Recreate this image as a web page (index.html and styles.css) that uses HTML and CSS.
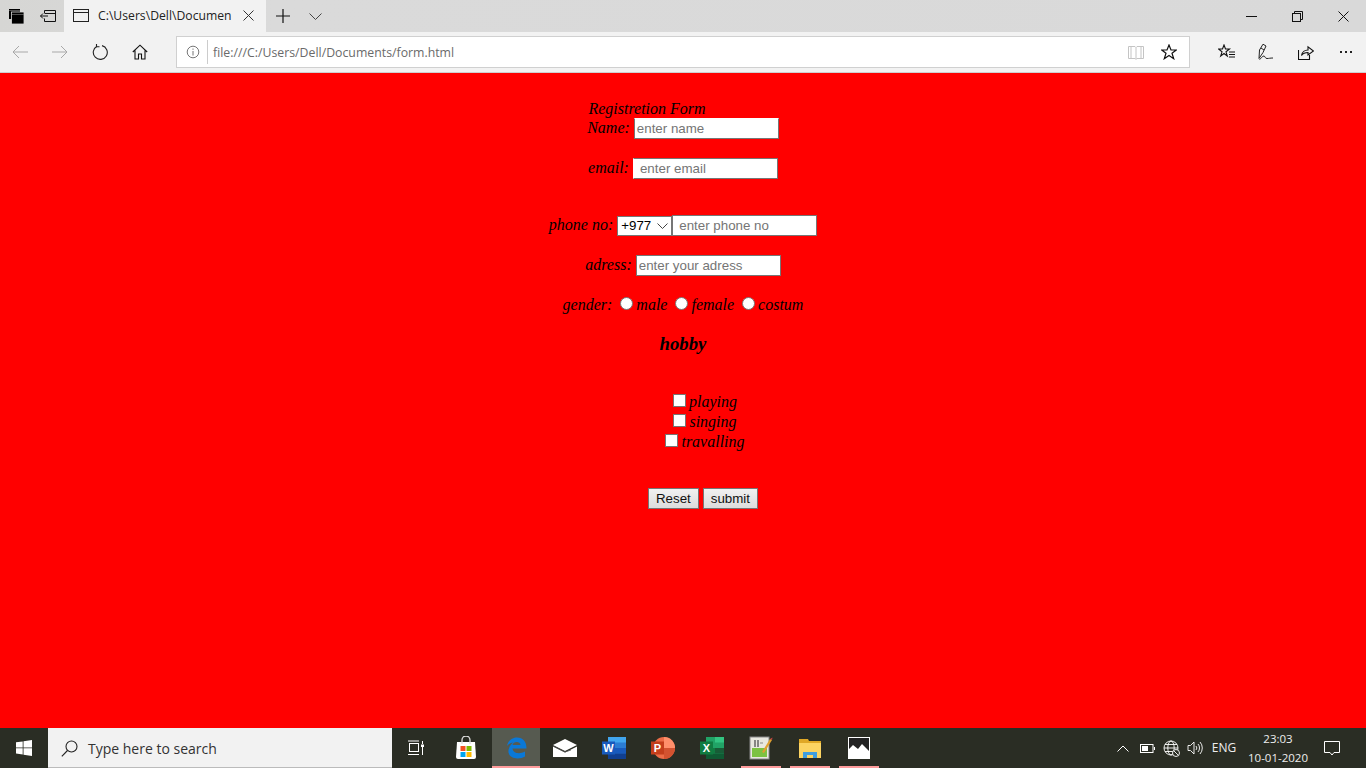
FILE: index.html
```html
<!DOCTYPE html>
<html lang="en">
<head>
<meta charset="utf-8">
<title>form.html</title>
<link rel="stylesheet" href="styles.css">
</head>
<body>
<div class="browser">
  <div class="tabstrip">
    <div class="slot-strip">
      <svg width="15" height="15" viewBox="0 0 15 15"><rect x="0" y="0" width="11" height="10" fill="#000"/><rect x="2.500" y="3" width="12.500" height="12" fill="#000" stroke="#d9d9d9" stroke-width=".8"/><path d="M3 5.500h12" stroke="#888" stroke-width=".6"/><path d="M0 1.500h11" stroke="#888" stroke-width=".6"/></svg>
    </div>
    <div class="slot-strip">
      <svg width="18" height="16" viewBox="0 0 18 16" fill="none" stroke="#111"><path d="M5.500 2.500h11v11h-11v-3M5.500 5.500v-3M6 5.500h10.500"/><path d="M9 8H1.500M4 5.500L1.500 8 4 10.500"/></svg>
    </div>
    <div class="tab">
      <svg width="16" height="13" viewBox="0 0 16 13" fill="none" stroke="#222"><rect x=".5" y=".5" width="15" height="12"/><path d="M.5 3.500h15"/></svg>
      <span class="tab-title">C:\Users\Dell\Documen</span>
      <svg class="tab-close" width="11" height="11" viewBox="0 0 11 11" fill="none" stroke="#333"><path d="M.5.500l10 10M10.500.500l-10 10"/></svg>
    </div>
    <div class="slot-plus">
      <svg width="14" height="14" viewBox="0 0 14 14" fill="none" stroke="#111" stroke-width="1.200"><path d="M7 0v14M0 7h14"/></svg>
    </div>
    <div class="slot-chev">
      <svg width="13" height="7" viewBox="0 0 13 7" fill="none" stroke="#444"><path d="M.5.500l6 6 6-6"/></svg>
    </div>
    <div class="strip-fill"></div>
    <div class="win-btn"><svg width="11" height="11" viewBox="0 0 11 11" fill="none" stroke="#111"><path d="M0 5.500h11"/></svg></div>
    <div class="win-btn"><svg width="11" height="11" viewBox="0 0 11 11" fill="none" stroke="#111"><rect x=".5" y="2.500" width="8" height="8"/><path d="M2.500 2.500v-2h8v8h-2"/></svg></div>
    <div class="win-btn"><svg width="11" height="11" viewBox="0 0 11 11" fill="none" stroke="#111"><path d="M.5.500l10 10M10.500.500l-10 10"/></svg></div>
  </div>
  <div class="toolbar">
    <div class="slot-tool"><svg width="16" height="14" viewBox="0 0 16 14" fill="none" stroke="#a8a8a8"><path d="M16 7H1M7 1L1 7l6 6"/></svg></div>
    <div class="slot-tool"><svg width="16" height="14" viewBox="0 0 16 14" fill="none" stroke="#a8a8a8"><path d="M0 7h15M9 1l6 6-6 6"/></svg></div>
    <div class="slot-tool"><svg width="16" height="16" viewBox="0 0 16 16" fill="none" stroke="#222" stroke-width="1.100"><path d="M5 2.200A7 7 0 1 0 10 1.600"/><path d="M4.500 0v3h3" transform="translate(0 -.2)"/></svg></div>
    <div class="slot-tool"><svg width="16" height="16" viewBox="0 0 16 16" fill="none" stroke="#111" stroke-width="1.100"><path d="M.8 8L8 1.200 15.200 8M3 6.500v8.500h3.500v-5h3v5H13V6.500"/></svg></div>
    <div class="addr">
      <svg width="14" height="14" viewBox="0 0 14 14" fill="none" stroke="#777"><circle cx="7" cy="7" r="5.800"/><path d="M7 6v4.500M7 3.500v1.300"/></svg>
      <span class="addr-sep"></span>
      <span class="addr-url">file:///C:/Users/Dell/Documents/form.html</span>
      <svg class="addr-book" width="16" height="15" viewBox="0 0 16 15" fill="none" stroke="#c4c4c4"><path d="M.5 1.500h6.500l1 1 1-1h6.500v12H9l-1 .8-1-.8H.5zM8 2.500v11M3 1.500v12M13 1.500v12"/></svg>
      <svg class="addr-star" width="16" height="16" viewBox="0 0 16 16" fill="none" stroke="#111" stroke-width="1.200"><path d="M8 1l2 5h5.300l-4.300 3.300 1.700 5.400L8 11.500l-4.700 3.200L5 9.300.7 6H6z"/></svg>
    </div>
    <div class="tools-right">
      <div class="slot-tool"><svg width="17" height="16" viewBox="0 0 17 16" fill="none" stroke="#111" stroke-width="1.100"><path d="M6 1l1.500 4h4L8 7.800l1.300 4.200L6 9.500 2.700 12 4 7.800.5 5h4z"/><path d="M11 8h6M11 10.500h6M11 13h6"/></svg></div>
      <div class="slot-tool"><svg width="16" height="18" viewBox="0 0 16 18" fill="none" stroke="#222"><path d="M1 15.500L1.500 7 5 1.200 8 3 5 9.500zM3 5l3 2"/><path d="M1.500 16.500c2-1 3-4 4.500-3.500s1 2.500 3 2.500 3-.5 6-.5"/></svg></div>
      <div class="slot-tool"><svg width="16" height="15" viewBox="0 0 16 15" fill="none" stroke="#111" stroke-width="1.100"><path d="M.5 5v9.500h11V10"/><path d="M3.500 10.500C4 7 7 5 10 5V1.800L15.500 6 10 10V7.500c-2.500 0-5 .8-6.500 3z"/></svg></div>
      <div class="slot-tool more"><span class="dot"></span><span class="dot"></span><span class="dot"></span></div>
    </div>
  </div>
  <main class="page">
    <form class="form">
      <div class="row row-title"><i>Registretion Form</i></div>
      <div class="row"><i>Name:</i> <input class="field field-name" type="text" placeholder="enter name"></div>
      <div class="row gap-m"><i>email:</i> <input class="field field-mail" type="text" placeholder="enter email"></div>
      <div class="row gap-l"><i>phone no:</i> <select class="code"><option>+977</option></select><input class="field field-wide" type="text" placeholder="enter phone no"></div>
      <div class="row gap-m"><i>adress:</i> <input class="field" type="text" placeholder="enter your adress"></div>
      <div class="row gap-m"><i>gender:</i> <input class="radio" type="radio" name="g"><i>male</i> <input class="radio" type="radio" name="g"><i>female</i> <input class="radio" type="radio" name="g"><i>costum</i></div>
      <div class="row gap-s hobby"><i>hobby</i></div>
      <div class="row gap-xl row-shift"><input class="check" type="checkbox"><i>playing</i></div>
      <div class="row row-shift"><input class="check" type="checkbox"><i>singing</i></div>
      <div class="row row-shift"><input class="check" type="checkbox"><i>travalling</i></div>
      <div class="row gap-b row-shift-btn"><button class="btn" type="reset">Reset</button> <button class="btn" type="button">submit</button></div>
    </form>
  </main>
  <footer class="taskbar">
    <div class="start"><svg width="16" height="16" viewBox="0 0 16 16" fill="#fff"><path d="M0 2.300l6.700-.9v6.100H0zM7.500 1.300L16 0v7.500H7.500zM0 8.300h6.700v6.200L0 13.600zM7.500 8.300H16V16l-8.500-1.200z"/></svg></div>
    <div class="search">
      <svg width="17" height="17" viewBox="0 0 17 17" fill="none" stroke="#222" stroke-width="1.100"><circle cx="10.500" cy="6.500" r="5.500"/><path d="M6.500 10.500L.8 16.300"/></svg>
      <span class="search-text">Type here to search</span>
    </div>
    <div class="task task-view"><svg width="16" height="16" viewBox="0 0 16 16" fill="none" stroke="#fff"><rect x="1.500" y="3.500" width="9" height="8"/><path d="M0 1h11M0 14.500h11M14.500 1v3M14.500 7v8"/><rect x="13" y="4.500" width="3" height="2.500" fill="#fff" stroke="none"/></svg></div>
    <div class="task task-store"><svg width="24" height="24" viewBox="0 0 24 24"><path d="M3 6h18l1 15a2 2 0 0 1-2 2H4a2 2 0 0 1-2-2z" fill="#fff"/><path d="M8 8V4a4 4 0 0 1 8 0v4" fill="none" stroke="#ddd" stroke-width="1.300"/><rect x="6.500" y="10" width="5" height="5" fill="#f25022"/><rect x="12.500" y="10" width="5" height="5" fill="#7fba00"/><rect x="6.500" y="16" width="5" height="5" fill="#00a4ef"/><rect x="12.500" y="16" width="5" height="5" fill="#ffb900"/></svg></div>
    <div class="task task-active"><svg width="21" height="22" viewBox="0 0 21 22"><path d="M1 9C2 3 7 .5 11 .5c6 0 9.500 4 9.500 11H6.500c.5 5 7 6 12.500 3v5c-5 3-15 3-16.500-4C2 12 4 8 7 5.500 5 6 2.500 7 1 9zM6.500 8h8c0-4-7.500-4-8 0z" fill="#0a78d7"/></svg></div>
    <div class="task"><svg width="24" height="18" viewBox="0 0 24 18"><path d="M0 6L12 0l12 6-12 6z" fill="#fff"/><path d="M0 7.500V18h24V7.500L12 13.500z" fill="#fff"/><path d="M0 7l12 6 6-2" fill="none" stroke="#555" stroke-width=".8"/></svg></div>
    <div class="task"><svg width="24" height="22" viewBox="0 0 24 22"><rect x="6" y="0" width="18" height="22" fill="#2b7cd3"/><rect x="6" y="0" width="18" height="5.500" fill="#41a5ee"/><rect x="6" y="11" width="18" height="5.500" fill="#185abd"/><rect x="6" y="16.500" width="18" height="5.500" fill="#103f91"/><rect x="0" y="4.500" width="13" height="13" fill="#185abd"/><text class="app-letter" x="6.500" y="15" text-anchor="middle">W</text></svg></div>
    <div class="task"><svg width="24" height="22" viewBox="0 0 24 22"><circle cx="13" cy="11" r="11" fill="#ed6c47"/><path d="M13 0a11 11 0 0 1 11 11H13z" fill="#ff8f6b"/><path d="M13 11h11a11 11 0 0 1-11 11z" fill="#d35230"/><rect x="0" y="4.500" width="13" height="13" fill="#c43e1c"/><text class="app-letter" x="6.500" y="15" text-anchor="middle">P</text></svg></div>
    <div class="task"><svg width="24" height="22" viewBox="0 0 24 22"><rect x="6" y="0" width="18" height="22" fill="#21a366"/><rect x="15" y="0" width="9" height="5.500" fill="#33c481"/><rect x="6" y="11" width="9" height="5.500" fill="#107c41"/><rect x="15" y="11" width="9" height="5.500" fill="#185c37"/><rect x="6" y="16.500" width="18" height="5.500" fill="#0f5a33"/><rect x="0" y="4.500" width="13" height="13" fill="#107c41"/><text class="app-letter" x="6.500" y="15" text-anchor="middle">X</text></svg></div>
    <div class="task task-open"><svg width="24" height="24" viewBox="0 0 24 24"><rect x="1" y="1" width="19" height="22" fill="#e8e8e0" stroke="#888"/><rect x="3" y="12" width="15" height="9" fill="#7cc242"/><path d="M6 4v7M9 4v7" stroke="#666" stroke-width="1.500"/><path d="M11 7h3" stroke="#888"/><path d="M13 16L21 3l2 1-8 13z" fill="#e0a030"/><path d="M21 3l2 1 .5-2.500z" fill="#c44"/></svg></div>
    <div class="task task-open"><svg width="22" height="20" viewBox="0 0 22 20"><path d="M0 1h9l1 2h12v17H0z" fill="#e0a826"/><rect x="0" y="5" width="22" height="15" fill="#fcd462"/><path d="M4 20v-6h14v6h-4v-3h-6v3z" fill="#3f9ee0"/></svg></div>
    <div class="task task-open"><svg width="22" height="22" viewBox="0 0 22 22"><rect x=".5" y=".5" width="21" height="21" fill="#222" stroke="#fff"/><path d="M0 22V13l5-5 5 4 4-5 8 8v7z" fill="#fff"/></svg></div>
    <div class="tray-fill"></div>
    <div class="tray"><svg width="12" height="7" viewBox="0 0 12 7" fill="none" stroke="#fff"><path d="M.5 6.500L6 1l5.500 5.500"/></svg></div>
    <div class="tray"><svg width="15" height="9" viewBox="0 0 15 9" fill="none" stroke="#fff"><rect x=".5" y=".5" width="12.500" height="8"/><rect x="2" y="2" width="6" height="5" fill="#fff" stroke="none"/><path d="M14.500 3v3"/></svg></div>
    <div class="tray"><svg width="17" height="17" viewBox="0 0 17 17" fill="none" stroke="#fff" stroke-width=".9"><circle cx="8" cy="8" r="7"/><ellipse cx="8" cy="8" rx="3.200" ry="7"/><path d="M1 8h14M2 4.500h12M2 11.500h12"/><circle cx="13" cy="13" r="3.500" fill="#2a2d24"/><path d="M10.800 10.800l4.400 4.400"/></svg></div>
    <div class="tray"><svg width="17" height="14" viewBox="0 0 17 14" fill="none" stroke="#fff" stroke-width=".9"><path d="M1 4.500v5h2.500L7 13V1L3.500 4.500z"/><path d="M9 5a3 3 0 0 1 0 4M11 3a6 6 0 0 1 0 8M13 1a9 9 0 0 1 0 12"/></svg></div>
    <div class="tray-lang">ENG</div>
    <div class="clock"><span>23:03</span><span>10-01-2020</span></div>
    <div class="notify"><svg width="16" height="15" viewBox="0 0 16 15" fill="none" stroke="#fff"><path d="M.5.500h15v11H10l-2 2.500-2-2.500H.5z"/></svg></div>
    <div class="edge-end"></div>
  </footer>
</div>
</body>
</html>
```
FILE: styles.css
```css
* { box-sizing: border-box; }
html, body { margin: 0; height: 100%; }
body { overflow: hidden; }
.browser { display: flex; flex-direction: column; height: 768px; width: 1366px; font-family: "Open Sans", "Liberation Sans", sans-serif; }

.tabstrip { display: flex; height: 32px; background: linear-gradient(90deg, #d6d6d4, #dadada 20%, #d9d9d9); flex: none; }
.slot-strip { width: 32px; display: flex; align-items: center; justify-content: center; }
.tab { width: 202px; background: #f2f2f2; display: flex; align-items: center; padding: 0 0 1px 9px; color: #222; }
.tab-title { font-size: 12.200px; margin-left: 9px; white-space: nowrap; width: 146px; overflow: hidden; line-height: 20px; }
.tab-close { margin-left: -1px; }
.slot-plus { width: 34px; display: flex; align-items: center; justify-content: center; }
.slot-chev { width: 30px; display: flex; align-items: center; justify-content: center; }
.strip-fill { flex: 1; }
.win-btn { width: 46px; display: flex; align-items: center; justify-content: center; }

.toolbar { display: flex; height: 41px; background: #f2f2f2; align-items: flex-start; border-bottom: 1px solid #cfcfcf; flex: none; }
.slot-tool { width: 40px; height: 40px; display: flex; align-items: center; justify-content: center; }
.addr { margin: 4px 0 0 16px; flex: 1; height: 32px; background: #fff; border: 1px solid #d0d0d0; display: flex; align-items: center; padding-left: 9px; }
.addr-sep { width: 1px; height: 24px; background: #ccc; margin: 0 5px 0 7px; }
.addr-url { font-size: 12.300px; color: #6a6a6a; white-space: nowrap; flex: 1; }
.addr-book { margin-right: 17px; }
.addr-star { margin-right: 12px; }
.tools-right { display: flex; padding-left: 16px; }
.more { gap: 3px; }
.dot { width: 2px; height: 2px; background: #222; }

.page { flex: 1; background: #f00; padding-top: 26px; min-height: 0; }
.form { font-family: "Liberation Serif", "Times New Roman", serif; font-size: 16px; color: #000; }
.row { height: 20px; line-height: 20px; text-align: center; white-space: nowrap; }
.row-title { height: 19px; padding-right: 72px; }
.gap-s { margin-top: 19px; }
.gap-m { margin-top: 20px; }
.gap-l { margin-top: 37px; }
.gap-xl { margin-top: 38px; }
.gap-b { margin-top: 36px; }
.row-shift { padding-left: 40px; }
.row-shift-btn { padding-left: 40px; }
.hobby { font-weight: bold; font-size: 18.720px; }

.field { width: 145px; height: 21px; border: 1px solid #767676; background: #fff; padding: 1px 2px; font: 13.333px "Liberation Sans", Arial, sans-serif; color: #000; border-radius: 0; outline: none; }
.field::placeholder { color: #757575; }
.field-name { border-top-color: #fff; }
.field-mail { border-left-color: #fff; padding-left: 6px; }
.field-wide { padding-left: 6px; }
.code { appearance: none; width: 55px; height: 20px; border: 1px solid #767676; font: 13.333px "Liberation Sans", Arial, sans-serif; color: #000; border-radius: 0; padding: 0 0 0 3px; background: #fff url("data:image/svg+xml,%3Csvg xmlns='http://www.w3.org/2000/svg' width='11' height='6'%3E%3Cpath d='M.5.500l5 5 5-5' fill='none' stroke='%23444'/%3E%3C/svg%3E") no-repeat right 3px center; }
.radio { appearance: none; width: 13px; height: 13px; margin: 0 3px 0 4px; border: 1px solid #767676; border-radius: 50%; background: #fff; }
.check { appearance: none; width: 13px; height: 13px; margin: 0 3px 0 4px; border: 1px solid #767676; background: #fff; border-radius: 0; }
.btn { height: 21px; padding: 1px 7px; border: 1px solid #767676; border-radius: 0; background: linear-gradient(#f1f1f1, #dcdcdc); font: 13.333px "Liberation Sans", Arial, sans-serif; color: #111; }

.taskbar { display: flex; height: 40px; background: #2a2d24; align-items: stretch; flex: none; color: #fff; }
.start { width: 48px; display: flex; align-items: center; justify-content: center; }
.search { width: 344px; background: #f2f2f2; display: flex; align-items: center; padding: 1px 0 0 13px; border-bottom: 1px solid #bbb; }
.search-text { font-size: 14px; color: #333; margin-left: 10px; }
.task { width: 49px; display: flex; align-items: center; justify-content: center; position: relative; }
.task-view { width: 48px; }
.task-store { width: 52px; }
.task-active { width: 48px; background: #565a50; }
.task-active::after, .task-open::after { content: ""; position: absolute; bottom: 0; height: 2px; background: #ff9c9c; }
.task-active::after { left: 0; right: 0; }
.task-open::after { left: 5px; right: 4px; }
.app-letter { font: bold 11px "Liberation Sans", Arial, sans-serif; fill: #fff; }
.tray-fill { flex: 1; }
.tray { display: flex; align-items: center; justify-content: center; width: 24px; position: relative; left: 1px; }
.tray-lang { font-size: 12px; width: 36px; text-align: center; line-height: 40px; color: #eee; }
.clock { width: 72px; display: flex; flex-direction: column; align-items: center; justify-content: center; font-size: 11.500px; line-height: 19px; color: #eee; }
.notify { width: 36px; display: flex; align-items: center; justify-content: center; }
.edge-end { width: 16px; }
```
